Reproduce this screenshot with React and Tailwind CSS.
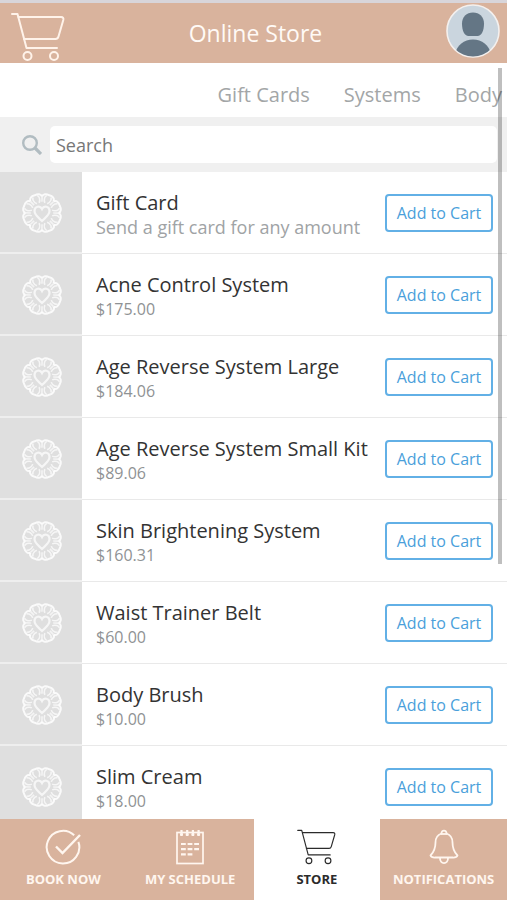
const products = [
  { name: "Gift Card", note: "Send a gift card for any amount" },
  { name: "Acne Control System", price: "$175.00" },
  { name: "Age Reverse System Large", price: "$184.06" },
  { name: "Age Reverse System Small Kit", price: "$89.06" },
  { name: "Skin Brightening System", price: "$160.31" },
  { name: "Waist Trainer Belt", price: "$60.00" },
  { name: "Body Brush", price: "$10.00" },
  { name: "Slim Cream", price: "$18.00" },
];

const categories = ["Gift Cards", "Systems", "Body"];

function CartIcon({ className, strokeWidth }) {
  return (
    <svg
      viewBox="0 0 54 50"
      fill="none"
      stroke="currentColor"
      strokeWidth={strokeWidth}
      strokeLinecap="round"
      strokeLinejoin="round"
      className={className}
      aria-hidden="true"
    >
      <path d="M1 2H6.5L15.5 36H46" />
      <path d="M7.5 5H50Q53 5.2 52.3 8L47.5 24.5Q46.8 27 44.5 27H13" />
      <circle cx="16.5" cy="44" r="4" />
      <circle cx="43" cy="44" r="4" />
    </svg>
  );
}

function Avatar() {
  return (
    <svg viewBox="0 0 54 54" className="size-[54px]" aria-hidden="true">
      <defs>
        <clipPath id="face">
          <circle cx="27" cy="27" r="25.5" />
        </clipPath>
      </defs>
      <circle cx="27" cy="27" r="26" fill="#cad5de" stroke="#f4f0ee" strokeWidth="1.6" />
      <g clipPath="url(#face)" fill="#647685">
        <path d="M27 8.5C33.5 8.5 38 13 38 19.5C38 27 35.5 32 31.5 32H22.5C18.5 32 16 27 16 19.5C16 13 20.5 8.5 27 8.5Z" />
        <path d="M9 50C11 41 18 35.5 27 35.5S43 41 45 50V54H9Z" />
      </g>
    </svg>
  );
}

function Emblem() {
  const petals = [0, 45, 90, 135, 180, 225, 270, 315];
  return (
    <svg viewBox="-21 -21 42 42" className="size-[42px]" fill="none" stroke="#fff" aria-hidden="true">
      {petals.map((angle) => (
        <g key={angle} transform={`rotate(${angle + 22.5})`}>
          <path d="M-6.2 -15.2C-6.5 -18.2 -3.5 -19.6 0 -19.2C3.5 -19.6 6.5 -18.2 6.2 -15.2" strokeWidth="2" opacity="0.85" />
          <path d="M-6.2 -15.2L-4.3 -10.3" strokeWidth="1.6" opacity="0.65" />
          <path d="M-1.200 -10.500C-4.2 -13 -3.6 -17.3 -2 -17.5M1.200 -10.500C4.2 -13 3.6 -17.3 2 -17.5" strokeWidth="1.6" opacity="0.7" />
        </g>
      ))}
      <path
        d="M0 8C-3 5 -7.5 2 -7.5 -2C-7.5 -6.5 -2 -8 0 -4C2 -8 7.5 -6.5 7.5 -2C7.5 2 3 5 0 8Z"
        strokeWidth="2.2"
        opacity="0.7"
      />
    </svg>
  );
}

function BookIcon() {
  return (
    <svg viewBox="0 0 36 36" className="size-9" fill="none" stroke="currentColor" strokeWidth="2" aria-hidden="true">
      <path d="M29.2 6.3A16.3 16.3 0 1 0 33.4 12.8" />
      <path d="M11 17.5L17.5 24L35 6" strokeWidth="2.4" />
    </svg>
  );
}

function ScheduleIcon() {
  return (
    <svg viewBox="0 0 36 36" className="size-9" fill="none" stroke="currentColor" aria-hidden="true">
      <rect x="5" y="3.5" width="26" height="31" strokeWidth="1.7" />
      <path d="M9.5 1V7M15.2 1V7M20.9 1V7M26.6 1V7" strokeWidth="2.2" />
      <path d="M8 5.5H11M13.7 5.5H16.7M19.4 5.5H22.4M25.1 5.5H28.1" strokeWidth="2" />
      <path d="M9 15H27M9 20.2H27M9 25.4H21" strokeWidth="2.2" strokeDasharray="4.8 1.8" />
    </svg>
  );
}

function BellIcon() {
  return (
    <svg viewBox="0 0 36 36" className="size-9" fill="none" stroke="currentColor" strokeWidth="1.8" strokeLinejoin="round" aria-hidden="true">
      <path d="M15.5 4.5C11 6 9.5 9.5 9.5 13.5C9.5 20 8 23 4.5 26.5C5.5 29 8 28.5 10 28.5H26C28 28.5 30.5 29 31.5 26.5C28 23 26.5 20 26.5 13.5C26.5 9.5 25 6 20.5 4.5" />
      <path d="M15.5 4.8C15 0.5 21 0.5 20.5 4.8" />
      <path d="M15 5H21" />
      <path d="M14 28.5C13.5 36 22.5 36 22 28.5" />
    </svg>
  );
}

function ProductRow({ product }) {
  return (
    <li className="flex min-h-[82px] shrink-0">
      <div className="flex w-[82px] shrink-0 items-center justify-center border-b-2 border-[#eeeeee] bg-[#dfdfdf] pt-[2px] pl-[2px]">
        <Emblem />
      </div>
      <div className="flex min-w-0 flex-1 items-center justify-between border-b border-[#e9e9e9] px-[14px]">
        <div className="min-w-0 pt-1">
          <h2 className="text-[20px] leading-6 text-[#333333]">{product.name}</h2>
          {product.note ? (
            <p className="text-[18px] leading-6 text-[#a0a3a5]">{product.note}</p>
          ) : (
            <p className="text-[16px] leading-6 text-[#8f9294]">{product.price}</p>
          )}
        </div>
        <button className="h-[38px] w-[108px] shrink-0 rounded-[4px] border-2 border-[#62b0e6] text-[16px] text-[#4a9fdb]">
          Add to Cart
        </button>
      </div>
    </li>
  );
}

function NavItem({ label, icon, active }) {
  return (
    <a
      href="#"
      aria-current={active ? "page" : undefined}
      className={
        active
          ? "flex flex-1 flex-col items-center bg-white pt-[10px] text-[#2b2b2b]"
          : "flex flex-1 flex-col items-center bg-[#d9b39d] pt-[10px] text-[#fff6ef]"
      }
    >
      {icon}
      <span className="mt-1 text-[13px] leading-5 font-bold">{label}</span>
    </a>
  );
}

export default function App() {
  return (
    <div className="relative flex h-screen flex-col overflow-hidden bg-white font-['Open_Sans',sans-serif]">
      <header className="flex h-[63px] shrink-0 items-center justify-between border-t-3 border-[#d8d5da] bg-[#d9b39d] pr-[7px] pb-1 pl-[11px]">
        <button aria-label="Cart" className="w-[54px] pt-3 text-[#fff3ea]">
          <CartIcon className="h-[50px] w-[54px]" strokeWidth="2" />
        </button>
        <h1 className="pt-1 text-[23px] text-[#fffaf6]">Online Store</h1>
        <button aria-label="Profile">
          <Avatar />
        </button>
      </header>

      <nav className="flex h-[54px] shrink-0 items-center justify-end gap-[34px] pt-[10px] pr-[5px]">
        {categories.map((category) => (
          <a key={category} href="#" className="text-[20px] text-[#a3a6a7]">
            {category}
          </a>
        ))}
      </nav>

      <div className="flex h-[55px] shrink-0 items-center bg-[#f0f0f0] pr-[10px] pl-[22px]">
        <label htmlFor="search" aria-label="Search" className="mr-2 text-[#b1bcc1]">
          <svg viewBox="0 0 20 20" className="size-5" fill="none" stroke="currentColor" aria-hidden="true">
            <circle cx="8" cy="8" r="6.8" strokeWidth="2.4" />
            <path d="M13 13L19 19" strokeWidth="3.2" />
          </svg>
        </label>
        <input
          id="search"
          type="text"
          placeholder="Search"
          className="h-[37px] min-w-0 flex-1 rounded-[5px] bg-white px-[6px] text-[18px] outline-none placeholder:text-[#777777]"
        />
      </div>

      <ul className="flex min-h-0 flex-1 flex-col overflow-hidden">
        {products.map((product) => (
          <ProductRow key={product.name} product={product} />
        ))}
      </ul>

      <nav className="flex h-[81px] shrink-0">
        <NavItem label="BOOK NOW" icon={<BookIcon />} />
        <NavItem label="MY SCHEDULE" icon={<ScheduleIcon />} />
        <NavItem label="STORE" active icon={<CartIcon className="h-9 w-[39px]" strokeWidth="1.6" />} />
        <NavItem label="NOTIFICATIONS" icon={<BellIcon />} />
      </nav>

      <div className="absolute top-[68px] right-[5px] h-[496px] w-1 bg-black/25" />
    </div>
  );
}
